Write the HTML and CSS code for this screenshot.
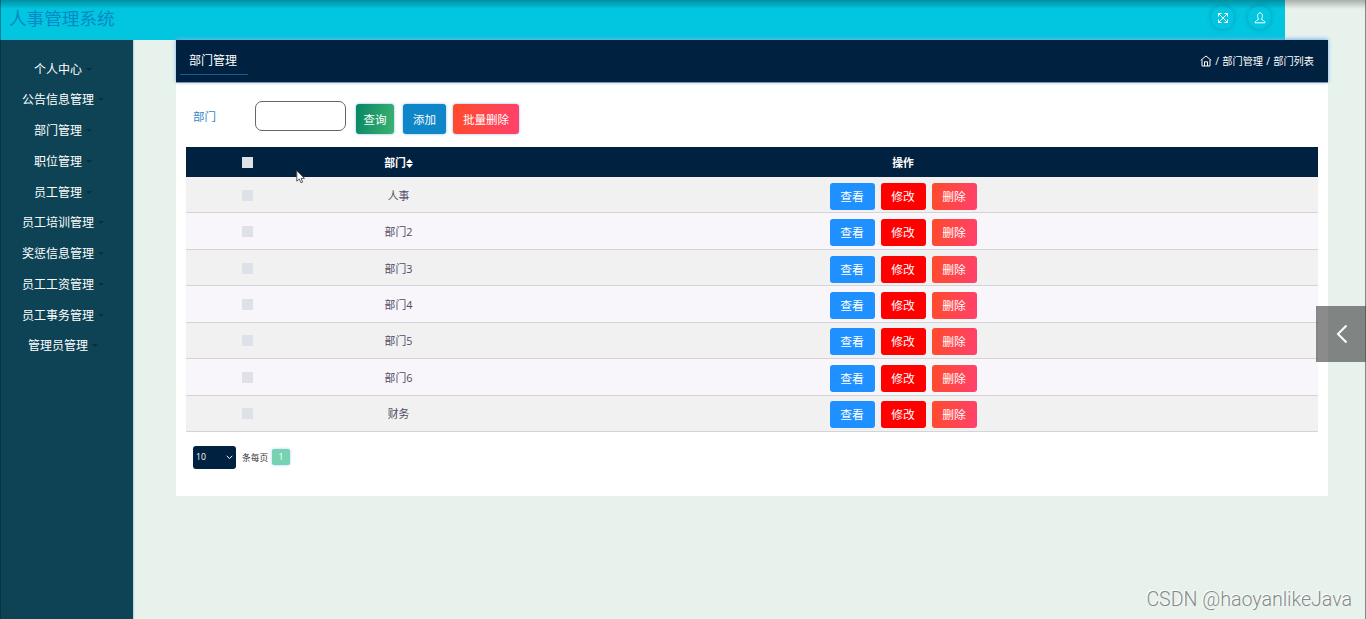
FILE: index.html
```
<!DOCTYPE html>
<html lang="zh-CN">
<head>
    <meta charset="UTF-8">
    <meta name="viewport" content="width=device-width, initial-scale=1.0">
    <title>人事管理系统</title>
    <link rel="stylesheet" href="styles.css">
</head>
<body>

<!-- Top bar -->
<header class="topbar">
    <h1>人事管理系统</h1>
    <div class="tools">
        <span class="tool">
            <svg width="12" height="12" viewBox="0 0 12 12"><path d="M1.500 4.500v-3h3M7.500 1.500h3v3M10.500 7.500v3h-3M4.500 10.500h-3v-3M1.500 1.500l9 9M10.500 1.500l-9 9"/></svg>
        </span>
        <span class="tool">
            <svg width="12" height="12" viewBox="0 0 12 12"><path d="M4.700 7.200C2.800 5 3.300.8 6 .8s3.200 4.200 1.300 6.400c.3.900 3.700 1 3.700 3.600H1c0-2.600 3.400-2.700 3.700-3.600z"/></svg>
        </span>
    </div>
</header>

<div class="layout">
    <!-- Sidebar -->
    <nav class="sidebar">
        <ul>
            <li><a>个人中心</a></li>
            <li><a>公告信息管理</a></li>
            <li><a>部门管理</a></li>
            <li><a>职位管理</a></li>
            <li><a>员工管理</a></li>
            <li><a>员工培训管理</a></li>
            <li><a>奖惩信息管理</a></li>
            <li><a>员工工资管理</a></li>
            <li><a>员工事务管理</a></li>
            <li><a>管理员管理</a></li>
        </ul>
    </nav>

    <!-- Content -->
    <main class="content">
        <div class="page-title">
            <h3>部门管理</h3>
            <div class="breadcrumb">
                <svg width="12" height="12" viewBox="0 0 12 12"><path d="M.8 5.300L6 1l5.200 4.300M2 4.800V11h8V4.800M4.500 11V6.800h3V11"/></svg>
                <span>/ 部门管理 / 部门列表</span>
            </div>
        </div>

        <form class="search">
            <label for="bumen">部门</label>
            <input type="text" id="bumen">
            <button type="button" class="btn query">查询</button>
            <button type="button" class="btn add">添加</button>
            <button type="button" class="btn remove">批量删除</button>
        </form>

        <table>
            <colgroup>
                <col class="col-check">
                <col class="col-name">
                <col>
            </colgroup>
            <thead>
                <tr>
                    <th><i class="check"></i></th>
                    <th>部门<svg class="sort" width="7" height="9" viewBox="0 0 7 9"><path d="M3.500 0L7 4H0zM3.500 9L0 5h7z"/></svg></th>
                    <th>操作</th>
                </tr>
            </thead>
            <tbody id="rows"></tbody>
        </table>

        <div class="pager">
            <span class="page-size">10
                <svg width="7" height="5" viewBox="0 0 7 5"><path d="M.7.8l2.800 2.800L6.300.8"/></svg>
            </span>
            <span>条每页</span>
            <span class="page">1</span>
        </div>
    </main>
</div>

<div class="drawer">
    <svg width="12" height="20" viewBox="0 0 12 20"><path d="M10.500 1.500L2 10l8.500 8.500"/></svg>
</div>
<div class="watermark">CSDN @haoyanlikeJava</div>
<svg class="cursor" width="10" height="14" viewBox="0 0 10 14"><path d="M.8.8v10.400l2.500-2.200 1.700 3.800 1.700-.8-1.700-3.600h3.500z"/></svg>
<div class="frame"></div>

<script>
    const names = ['人事', '部门2', '部门3', '部门4', '部门5', '部门6', '财务'];

    // Fill the department table
    document.getElementById('rows').innerHTML = names.map(name => `
        <tr>
            <td><i class="check"></i></td>
            <td>${name}</td>
            <td>
                <div class="actions">
                    <button class="view">查看</button>
                    <button class="edit">修改</button>
                    <button class="remove">删除</button>
                </div>
            </td>
        </tr>`).join('');
</script>

</body>
</html>
```
FILE: styles.css
```
* {
    box-sizing: border-box;
    margin: 0;
    padding: 0;
}

body {
    font-family: "Open Sans", "Noto Sans CJK SC", sans-serif;
    font-size: 12px;
    background-color: #e8f2ed;
    height: 100vh;
    overflow: hidden;
    display: flex;
    flex-direction: column;
}

svg {
    fill: none;
    stroke: #fff;
}

button {
    border: none;
    color: #fff;
    font-family: inherit;
    white-space: nowrap;
}

/* Top bar */
.topbar {
    width: 1285px;
    height: 40px;
    flex: none;
    padding: 0 14px 5px 9px;
    display: flex;
    align-items: center;
    justify-content: space-between;
    background: #02c5df;
}

.topbar h1 {
    font-size: 17.6px;
    line-height: 24px;
    font-weight: 400;
    color: #0689c6;
    margin-top: 1px;
}

.tools {
    display: flex;
    gap: 14px;
}

.tool {
    width: 23px;
    height: 23px;
    border-radius: 50%;
    display: flex;
    align-items: center;
    justify-content: center;
    box-shadow: 0 0 4px rgba(0, 80, 110, 0.35);
}

.layout {
    flex: 1;
    display: flex;
    align-items: flex-start;
}

/* Sidebar */
.sidebar {
    width: 133px;
    align-self: stretch;
    padding: 13.2px 17px 0 0;
    background: #0d4354;
    box-shadow: 0 0 2px #4fa9cc;
}

.sidebar ul {
    list-style: none;
}

.sidebar li {
    height: 30.75px;
    display: flex;
    align-items: center;
    justify-content: center;
    color: #fff;
}

.sidebar a::after {
    content: "";
    display: inline-block;
    border: 3px solid transparent;
    border-top-color: #082f3c;
    border-bottom: none;
    margin: 0 -10px 3px 4px;
}

/* Content */
.content {
    width: 1152px;
    height: 456px;
    margin-left: 43px;
    background: #fff;
}

.page-title {
    height: 43px;
    padding: 0 14px 0 4px;
    display: flex;
    align-items: center;
    justify-content: space-between;
    background: #00213f;
    border-bottom: 1px solid #8293a3;
    box-shadow: 0 -1px 4px #76b0ea;
    color: #fff;
}

.page-title h3 {
    font-size: 12px;
    font-weight: 400;
    line-height: 26px;
    padding: 2px 9px 0;
    margin-bottom: 1px;
    width: 68px;
    border-bottom: 1px solid #0f5f9b;
    white-space: nowrap;
}

.breadcrumb {
    display: flex;
    align-items: center;
    gap: 3px;
    font-size: 10.2px;
    word-spacing: 0.6px;
    margin-bottom: 1px;
}

.search {
    height: 64px;
    padding: 0 17px;
    display: flex;
    align-items: center;
}

.search label {
    width: 62px;
    font-size: 11.5px;
    color: #3388c0;
    margin-top: 2px;
}

.search input {
    width: 91px;
    height: 30px;
    margin: 1px 10px 0 0;
    border: 1px solid #666;
    border-radius: 7px;
    background: #fff;
}

.btn {
    height: 30px;
    margin-top: 8px;
    border-radius: 3px;
    font-size: 11.5px;
    box-shadow: 0 0 3px #8dbcf0;
}

.query {
    width: 38px;
    margin-right: 9px;
    background: linear-gradient(100deg, #078664, #3cb371);
}

.add {
    width: 43px;
    margin-right: 7px;
    background: #0e86c8;
}

.btn.remove {
    width: 66px;
}

.remove {
    background: linear-gradient(100deg, #ff4b2b, #ff416c);
}

/* Table */
table {
    width: 1132px;
    margin-left: 10px;
    table-layout: fixed;
    border-collapse: separate;
    border-spacing: 0;
    text-align: center;
    font-size: 10.8px;
    color: #504b65;
}

.col-check {
    width: 123px;
}

.col-name {
    width: 179px;
}

th {
    height: 30px;
    background: #00213f;
    color: #fff;
    font-weight: 700;
}

td {
    height: 36.43px;
    border-bottom: 1px solid #d4d3d6;
}

tbody tr {
    background: #f8f6fa;
}

tbody tr:nth-child(odd) {
    background: #f1f1f1;
}

.check {
    display: block;
    width: 11px;
    height: 11px;
    margin: 0 auto;
    background: #dee2e8;
}

td .check {
    margin-top: 1px;
}

.sort {
    fill: #fff;
    stroke: none;
    vertical-align: -1px;
}

.actions {
    display: flex;
    justify-content: center;
    gap: 6px;
    padding-top: 3px;
}

.actions button {
    width: 45px;
    height: 27px;
    padding-bottom: 2px;
    border-radius: 3px;
    font-size: 11.8px;
}

.view {
    background: #1e90ff;
}

.edit {
    background: #f00;
}

/* Pager */
.pager {
    display: flex;
    align-items: center;
    padding: 14px 17px;
    font-size: 8.7px;
    color: #333;
}

.page-size {
    width: 43px;
    height: 23px;
    padding: 0 3px;
    margin-right: 6px;
    display: flex;
    align-items: center;
    justify-content: space-between;
    border-radius: 3px;
    background: #00213f;
    color: #fff;
}

.page {
    width: 18px;
    height: 16px;
    margin-left: 4px;
    border-radius: 2px;
    background: #77d2b2;
    box-shadow: 0 0 3px #a9cdf5;
    color: #fff;
    text-align: center;
    line-height: 16px;
}

/* Overlays */
.drawer {
    position: absolute;
    right: 0;
    top: 306px;
    width: 50px;
    height: 56px;
    padding-left: 2px;
    display: flex;
    align-items: center;
    justify-content: center;
    background: rgba(40, 40, 40, 0.54);
}

.drawer svg {
    stroke-width: 2;
}

.watermark {
    position: absolute;
    right: 14px;
    bottom: 7px;
    font-family: Roboto, "Liberation Sans", sans-serif;
    font-size: 19.6px;
    font-weight: 300;
    line-height: 24px;
    color: #858a88;
    text-shadow: -1px -1px 0 #fff;
}

.cursor {
    position: absolute;
    left: 296px;
    top: 170px;
    fill: #fff;
    stroke: #555;
}

/* Window edge shading */
.frame {
    position: absolute;
    inset: 0;
    pointer-events: none;
    border-left: 1px solid rgba(0, 30, 40, 0.4);
    border-right: 1px solid rgba(60, 70, 70, 0.6);
    background: linear-gradient(rgba(0, 0, 0, 0.28), transparent 9px);
}
```
